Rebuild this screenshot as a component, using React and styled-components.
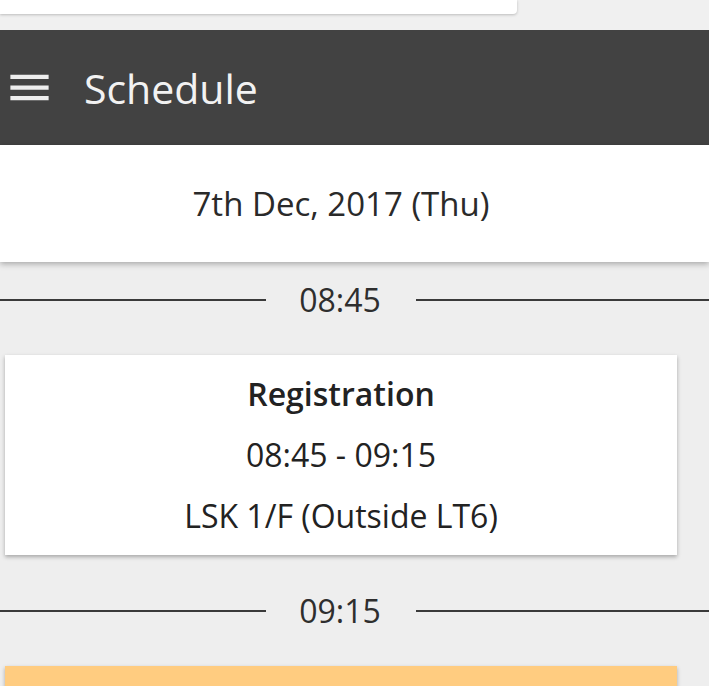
import React from 'react'
import styled, { createGlobalStyle } from 'styled-components'

const GlobalStyle = createGlobalStyle`
    html, body{
        margin: 0;
        padding: 0;
        overflow: hidden;
        background: #eeeeee;
        font-family: "Open Sans", "Noto Sans", sans-serif;
    }
`;

const sessions = [
    {
        time: "08:45",
        title: "Registration",
        range: "08:45 - 09:15",
        venue: "LSK 1/F (Outside LT6)",
    },
    {
        time: "09:15",
        tone: "break",
    },
];

function MenuIcon(){
    return (
        <svg width="51" height="51" viewBox="0 0 24 24" fill="#eeeeee">
            <path d="M3 18h18v-2H3v2zm0-5h18v-2H3v2zm0-7v2h18V6H3z"/>
        </svg>
    );
}

export default function App(){
    return (
        <Page>
            <GlobalStyle/>
            <TopStrip>
                <SearchCard/>
            </TopStrip>
            <Toolbar>
                <MenuButton><MenuIcon/></MenuButton>
                <Title>Schedule</Title>
            </Toolbar>
            <DateHeader>7th Dec, 2017 (Thu)</DateHeader>
            <List>
                {sessions.map((s, i)=>(
                    <React.Fragment key={s.time}>
                        <Divider $first={i===0}>
                            <Rule/>
                            <TimeLabel>{s.time}</TimeLabel>
                            <Rule $end/>
                        </Divider>
                        <Card $tone={s.tone}>
                            {s.title && <CardTitle>{s.title}</CardTitle>}
                            {s.range && <CardLine>{s.range}</CardLine>}
                            {s.venue && <CardLine>{s.venue}</CardLine>}
                        </Card>
                    </React.Fragment>
                ))}
            </List>
        </Page>
    );
}

const Page = styled.div`
    height: 100vh;
    overflow: hidden;
    background: #eeeeee;
`;

const TopStrip = styled.div`
    height: 30px;
    background: #f0f0f0;
`;

const SearchCard = styled.div`
    width: 517px;
    height: 14px;
    background: #ffffff;
    border-bottom-right-radius: 4px;
    box-shadow: 0 1px 3px rgba(0,0,0,0.22);
`;

const Toolbar = styled.header`
    height: 115px;
    background: #424242;
    display: flex;
    align-items: center;
    padding-left: 4px;
    box-sizing: border-box;
`;

const MenuButton = styled.div`
    display: flex;
    width: 51px;
    height: 51px;
`;

const Title = styled.h1`
    margin: 0 0 0 29px;
    font-size: 41px;
    font-weight: 400;
    color: #f2f2f2;
    letter-spacing: 0;
`;

const DateHeader = styled.div`
    position: relative;
    z-index: 1;
    height: 117px;
    padding-right: 27px;
    background: #ffffff;
    display: flex;
    justify-content: center;
    align-items: center;
    font-size: 33px;
    color: #2a2a2a;
    box-shadow: 0 2px 6px rgba(0,0,0,0.3);
`;

const List = styled.div`
    display: flex;
    flex-direction: column;
`;

const Divider = styled.div`
    display: flex;
    align-items: center;
    padding: ${({$first})=>($first?`16px 0 33px`:`34px 0 33px`)};
`;

const Rule = styled.div`
    flex: 1 1 ${({$end})=>($end?`27px`:`0px`)};
    height: 2px;
    background: #3a3a3a;
`;

const TimeLabel = styled.span`
    margin: 0 35px 0 33px;
    font-size: 32px;
    line-height: 44px;
    color: #2e2e2e;
`;

const Card = styled.div`
    margin: 0 32px 0 5px;
    padding: 8px 0 9px;
    min-height: ${({$tone})=>($tone?`120px`:`auto`)};
    background: ${({$tone})=>($tone==="break"?`#ffcc80`:`#ffffff`)};
    box-shadow: 0 2px 4px rgba(0,0,0,0.3);
    display: flex;
    flex-direction: column;
    align-items: center;
    color: #222222;
`;

const CardTitle = styled.div`
    font-size: 32px;
    font-weight: 600;
    line-height: 61px;
`;

const CardLine = styled.div`
    font-size: 32px;
    line-height: 61px;
`;
